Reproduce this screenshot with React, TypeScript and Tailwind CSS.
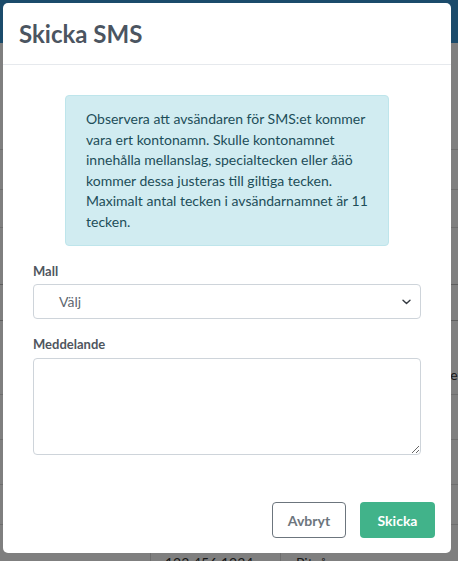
function BackgroundPage() {
  // the page behind the dialog, only its edges show
  return (
    <div className="flex flex-col text-[14px] text-[#333]">
      <div className="h-[43px] bg-[#3797d7]" />
      <div className="h-[107px] border-b border-[#dddddd]" />
      <div className="h-[40px] border-b border-[#dddddd]" />
      <div className="h-[38px] border-b border-[#dddddd]" />
      <div className="h-[57px] border-b border-[#bbbbbb]" />
      <div className="h-[36px] border-b border-[#bbbbbb]" />
      <div className="flex h-[74px] items-center justify-end border-b border-[#dddddd]">
        <span className="-mr-[20px] mt-[34px] w-[36px]">Ref</span>
      </div>
      <div className="h-[45px] border-b border-[#dddddd]" />
      <div className="h-[45px] border-b border-[#dddddd]" />
      <div className="h-[40px] border-b border-[#dddddd]" />
      <div className="flex h-[66px]">
        <div className="w-[151px] border-r border-[#dddddd]" />
        <div className="flex w-[130px] items-center border-r border-[#dddddd] pl-[14px] pt-[8px]">
          123 456 1234
        </div>
        <div className="flex flex-1 items-center pl-[15px] pt-[8px]">Piteå</div>
      </div>
    </div>
  );
}

function Chevron() {
  return (
    <svg width="9" height="6" viewBox="0 0 9 6" fill="none">
      <path d="M1 1.2l3.5 3.4L8 1.2" stroke="#343a40" strokeWidth="1.4" strokeLinecap="round" strokeLinejoin="round" />
    </svg>
  );
}

export default function App() {
  return (
    <div className="relative h-[561px] w-[458px] overflow-hidden bg-white font-['Lato',sans-serif]">
      <BackgroundPage />
      <div className="absolute inset-0 bg-black/50" />

      <div className="absolute left-[3px] top-[3px] flex h-[550px] w-[448px] flex-col rounded-[5px] bg-white">
        <div className="flex h-[62px] items-center border-b border-[#e6e9ed] px-[16px]">
          <h2 className="text-[24px] font-bold leading-none text-[#4b5561]">Skicka SMS</h2>
        </div>

        <div className="flex flex-col px-[30px]">
          <div className="mx-auto mt-[30px] w-[324px] rounded-[4px] border border-[#bee5eb] bg-[#d1ecf1] px-[20px] py-[13px] text-[14px] leading-[20.5px] text-[#1d4e59]">
            Observera att avsändaren för SMS:et kommer vara ert kontonamn. Skulle kontonamnet
            innehålla mellanslag, specialtecken eller åäö kommer dessa justeras till giltiga
            tecken. Maximalt antal tecken i avsändarnamnet är 11 tecken.
          </div>

          <label className="mt-[16px] text-[13px] font-bold leading-[18px] text-[#4f565e]">Mall</label>
          <div className="mt-[4px] flex h-[35px] items-center justify-between rounded-[4px] border border-[#ced4da] pl-[25px] pr-[9px]">
            <span className="text-[14px] text-[#5f6770]">Välj</span>
            <Chevron />
          </div>

          <label className="mt-[16px] text-[13px] font-bold leading-[18px] text-[#4f565e]">Meddelande</label>
          <textarea className="mt-[5px] block h-[97px] w-full resize-y rounded-[4px] border border-[#ced4da] outline-none" />
        </div>

        <div className="mt-auto flex justify-end gap-[14px] pb-[15px] pr-[16px]">
          <button className="h-[36px] w-[74px] rounded-[4px] border border-[#6c757d] text-[14px] font-bold text-[#6c757d]">
            Avbryt
          </button>
          <button className="h-[36px] w-[75px] rounded-[4px] bg-[#41b38a] text-[14px] font-bold text-white">
            Skicka
          </button>
        </div>
      </div>
    </div>
  );
}
